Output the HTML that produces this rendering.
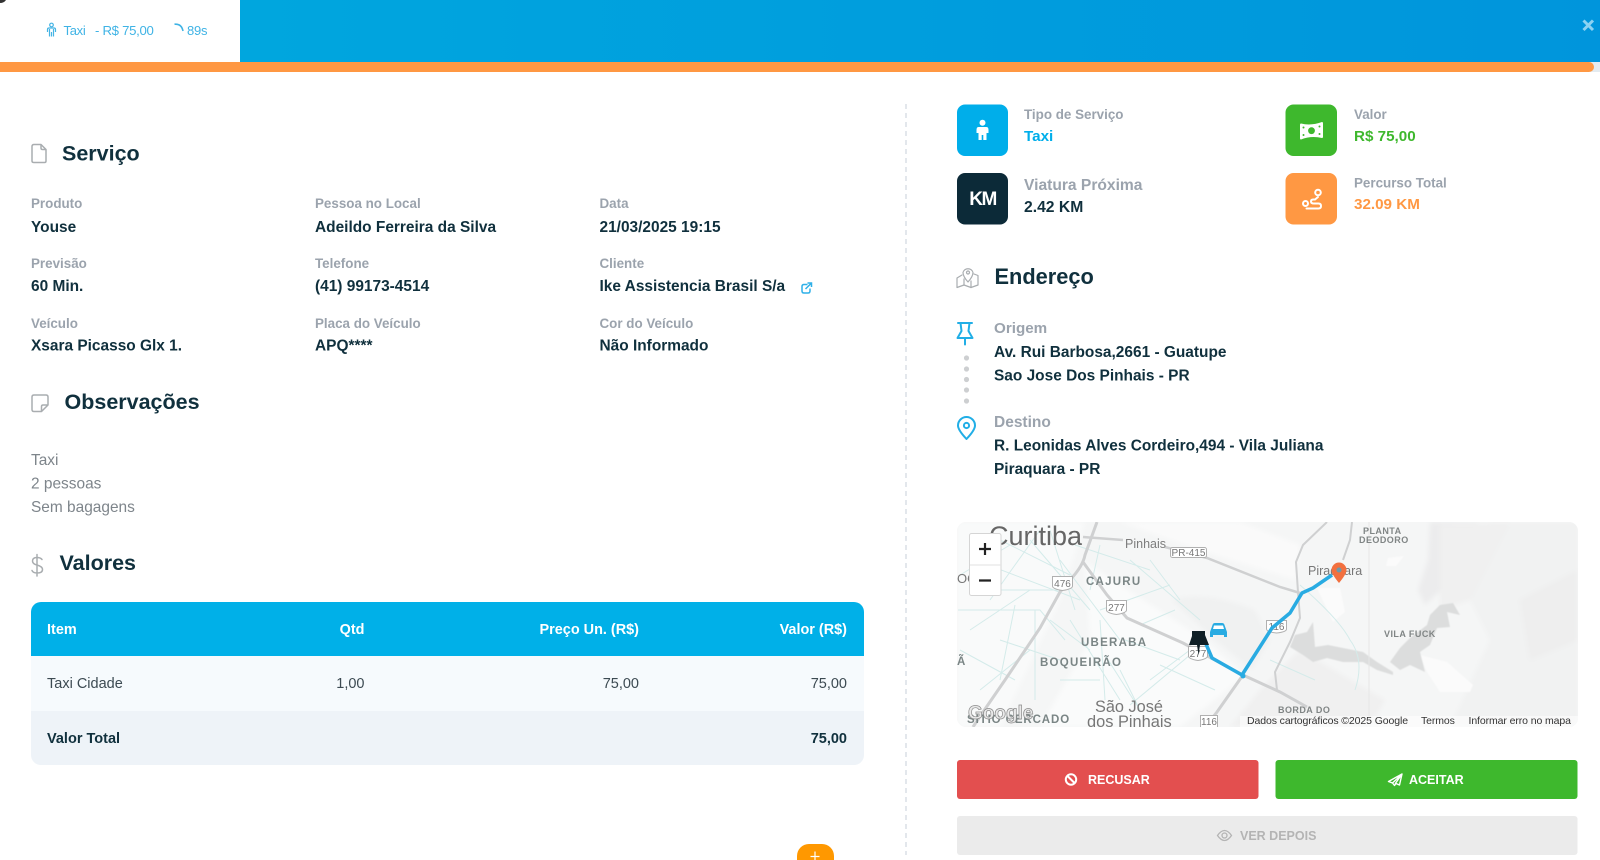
<!DOCTYPE html>
<html lang="pt"><head><meta charset="utf-8"><title>Serviço</title>
<style>
html,body{margin:0;padding:0;background:#fff;width:1600px;height:860px;overflow:hidden}
svg{position:absolute;left:0;top:0;display:block}
text{font-family:"Liberation Sans",sans-serif}
.h{font-size:21.5px;font-weight:700;fill:#10303d}
.l{font-size:13.4px;font-weight:700;fill:#9ba3ad}
.v{font-size:15.45px;font-weight:700;fill:#10303d}
.s{font-size:15.2px;font-weight:700}
.o{font-size:15.45px;fill:#7e858b}
.th{font-size:14.45px;font-weight:700;fill:#fff}
.td{font-size:14.5px;fill:#3c4a52}
.gi{fill:none;stroke:#a9adb0;stroke-width:1.5;stroke-linejoin:round;stroke-linecap:round}
.m{fill:#7a8585;font-weight:700;font-size:11.5px;letter-spacing:1.25px}
.ms{fill:#808585;font-size:9px;font-weight:700;letter-spacing:.45px}
.sh{fill:#fff;stroke:#b0b0b0;stroke-width:1}
.st{font-size:10px;fill:#777;text-anchor:middle}
.r1{fill:none;stroke:#cfd0d1;stroke-width:3}
.r2{fill:none;stroke:#d4ebea;stroke-width:1}
.btn{font-size:12.5px;font-weight:700;fill:#fff}
</style></head><body>
<svg width="1600" height="860" viewBox="0 0 1600 860" xmlns="http://www.w3.org/2000/svg">
<defs>
<linearGradient id="hd" x1="0" x2="1"><stop offset="0" stop-color="#00a6de"/><stop offset="1" stop-color="#0095dc"/></linearGradient>
<clipPath id="mc"><rect x="957" y="522" width="621" height="205" rx="9"/></clipPath>
<filter id="b2" x="-10%" y="-10%" width="120%" height="120%"><feGaussianBlur stdDeviation="2.500"/></filter>
<filter id="b1" x="-10%" y="-10%" width="120%" height="120%"><feGaussianBlur stdDeviation=".6"/></filter>
</defs>

<!-- top bar -->
<path d="M0 3Q4 3 6 0H0Z" fill="#333"/>
<rect x="240" y="0" width="1360" height="62" fill="url(#hd)"/>
<rect x="0" y="62" width="1600" height="10" fill="#e4ebf0"/>
<path d="M0 62H1589a5 5 0 0 1 0 10H0z" fill="#ff9843"/>
<g fill="none" stroke="#45b4e4" stroke-width="1.2">
<circle cx="51.500" cy="25" r="1.800"/>
<path d="M47.500 32V29.500Q47.500 28 49 28H54Q55.500 28 55.500 29.500V32M49.500 29V36.500M53.500 29V36.500M51.500 32V36.500"/>
</g>
<text x="63.500" y="35" font-size="13" letter-spacing="-.3" fill="#3fb3e5">Taxi</text>
<text x="95" y="35" font-size="13.200" letter-spacing="-.3" fill="#3fb3e5">- R$ 75,00</text>
<path d="M174.500 24.200Q181.500 23.500 183 31" fill="none" stroke="#3fb3e5" stroke-width="1.600"/>
<text x="187" y="35" font-size="13" letter-spacing="-.2" fill="#3fb3e5">89s</text>
<path d="M1583.500 20.500L1593 30M1593 20.500L1583.500 30" stroke="#8dd2f2" stroke-width="3"/>

<!-- divider -->
<line x1="906" y1="104" x2="906" y2="855" stroke="#e3e7ec" stroke-width="2" stroke-dasharray="5 4"/>

<!-- Serviço -->
<path class="gi" d="M34 144.500H41L46 149.500V161Q46 162.500 44.500 162.500H34Q32 162.500 32 161V146.500Q32 144.500 34 144.500ZM41 144.500V148Q41 149.500 42.500 149.500H46"/>
<text x="62" y="160.500" class="h">Serviço</text>

<text x="31" y="208" class="l">Produto</text><text x="31" y="232" class="v">Youse</text>
<text x="315" y="208" class="l">Pessoa no Local</text><text x="315" y="232" class="v">Adeildo Ferreira da Silva</text>
<text x="599.500" y="208" class="l">Data</text><text x="599.500" y="232" class="v">21/03/2025 19:15</text>

<text x="31" y="268" class="l">Previsão</text><text x="31" y="291" class="v">60 Min.</text>
<text x="315" y="268" class="l">Telefone</text><text x="315" y="291" class="v">(41) 99173-4514</text>
<text x="599.500" y="268" class="l">Cliente</text><text x="599.500" y="291" class="v">Ike Assistencia Brasil S/a</text>
<g fill="none" stroke="#2fb0e8" stroke-width="1.500"><path d="M807.500 284.500H804Q802 284.500 802 286.500V291Q802 293 804 293H808Q810 293 810 291V288.500"/><path d="M805.500 289L811 283.500M807.500 283H811.500V287"/></g>

<text x="31" y="328" class="l">Veículo</text><text x="31" y="350.500" class="v">Xsara Picasso Glx 1.</text>
<text x="315" y="328" class="l">Placa do Veículo</text><text x="315" y="350.500" class="v">APQ****</text>
<text x="599.500" y="328" class="l">Cor do Veículo</text><text x="599.500" y="350.500" class="v">Não Informado</text>

<!-- Observações -->
<path class="gi" d="M34 395H46Q48 395 48 397V405L41.500 411.500H34Q32 411.500 32 409.500V397Q32 395 34 395ZM48 405H43Q41.500 405 41.500 406.500V411.500"/>
<text x="64.500" y="409" class="h">Observações</text>
<text x="31" y="465" class="o">Taxi</text>
<text x="31" y="488.500" class="o">2 pessoas</text>
<text x="31" y="512" class="o">Sem bagagens</text>

<!-- Valores -->
<path class="gi" d="M42 559.500Q40.500 557.500 37 557.500Q32.500 557.500 32.500 561Q32.500 564 37 565Q42.500 566.500 42.500 569.500Q42.500 573 37 573Q33 573 32 570.500M37 554.500V576"/>
<text x="59.500" y="570" class="h">Valores</text>

<!-- table -->
<path d="M31 612a10 10 0 0 1 10-10H854a10 10 0 0 1 10 10V656H31z" fill="#00b0e8"/>
<rect x="31" y="656" width="833" height="55" fill="#f6fafd"/>
<path d="M31 711H864V755a10 10 0 0 1-10 10H41a10 10 0 0 1-10-10z" fill="#eef3f8"/>
<text x="47" y="634" class="th">Item</text>
<text x="364.500" y="634" class="th" text-anchor="end">Qtd</text>
<text x="639" y="634" class="th" text-anchor="end">Preço Un. (R$)</text>
<text x="847" y="634" class="th" text-anchor="end">Valor (R$)</text>
<text x="47" y="688" class="td">Taxi Cidade</text>
<text x="364.500" y="688" class="td" text-anchor="end">1,00</text>
<text x="639" y="688" class="td" text-anchor="end">75,00</text>
<text x="847" y="688" class="td" text-anchor="end">75,00</text>
<text x="47" y="743" class="td" style="font-weight:700;fill:#10303d">Valor Total</text>
<text x="847" y="743" class="td" text-anchor="end" style="font-weight:700;fill:#10303d">75,00</text>

<!-- FAB -->
<path d="M797 860V856a12 12 0 0 1 12-12H822a12 12 0 0 1 12 12V860z" fill="#ff9800"/>
<path d="M815 851.500V860M810.500 856.500H819.500" stroke="#fff" stroke-width="1.200"/>

<!-- stat boxes -->
<rect x="957" y="104.500" width="51" height="51.500" rx="8" fill="#00aeea"/>
<g fill="#fff"><circle cx="982.500" cy="122.800" r="3"/><path d="M978.500 127H986.500Q988.500 127 988.500 130V133H986.500V140H983.300V135H981.700V140H978.500V133H976.500V130Q976.500 127 978.500 127Z"/></g>
<text x="1024" y="119" class="l">Tipo de Serviço</text>
<text x="1024" y="141" class="s" style="fill:#00aeea">Taxi</text>

<rect x="1285.500" y="104.500" width="51.500" height="51.500" rx="8" fill="#3eb82d"/>
<path d="M1301 123.500Q1311 126 1322 122Q1323 122 1323 123.500V137Q1323 138 1322 138Q1311 135.500 1301 139.500Q1300 139.500 1300 138.500V125Q1300 123.500 1301 123.500Z" fill="#fff"/>
<circle cx="1311.500" cy="130.700" r="3.400" fill="#3eb82d"/>
<g fill="#3eb82d"><circle cx="1303.500" cy="127.500" r="1"/><circle cx="1303.500" cy="135" r="1"/><circle cx="1319.500" cy="126.500" r="1"/><circle cx="1319.500" cy="134" r="1"/></g>
<text x="1354" y="119" class="l">Valor</text>
<text x="1354" y="141" class="s" style="fill:#3eb82d">R$ 75,00</text>

<rect x="957" y="173" width="51" height="51.500" rx="8" fill="#0c2a38"/>
<text x="982.500" y="205" font-size="19" font-weight="700" text-anchor="middle" letter-spacing="-1.500" fill="#fff">KM</text>
<text x="1024" y="190" font-size="15.600" font-weight="700" fill="#9ba3ad">Viatura Próxima</text>
<text x="1024" y="212" class="v" style="font-size:15.7px">2.42 KM</text>

<rect x="1285.500" y="173" width="51.500" height="51.500" rx="8" fill="#ff9843"/>
<g fill="none" stroke="#fff" stroke-width="2" stroke-linecap="round"><circle cx="1318" cy="192.500" r="2.800"/><circle cx="1305.500" cy="203.500" r="2.500"/><path d="M1318 197L1315 199.500H1313Q1311 199.500 1311 201.500Q1311 203.500 1314 203.500H1318.500Q1321 203.500 1321 206Q1321 208.500 1318.500 208.500H1306.500"/></g>
<text x="1354" y="187.300" class="l">Percurso Total</text>
<text x="1354" y="209" class="s" style="fill:#ff9843">32.09 KM</text>

<!-- Endereço -->
<g class="gi" style="stroke-width:1.200"><path d="M962 275L957 278V287.500L964 285L971 287.500L978 285V275.500L974 274"/><path d="M964 285V279M971 287.500V281"/><path d="M968 282Q973 276.500 973 272.500A5.200 5.200 0 0 0 963 272.500Q963 276.500 968 282Z"/><circle cx="968" cy="272.500" r="1.500"/></g>
<text x="994.500" y="284" class="h" style="font-size:21.800px">Endereço</text>

<g fill="none" stroke="#21aee6" stroke-width="2" stroke-linejoin="round" stroke-linecap="round">
<path d="M958 323H972M960.500 323L961.500 331L957.500 338H972.500L968.500 331L969.500 323M965 338V344.500"/>
<path d="M966.500 439Q958 430 958 425.500A8.500 8.500 0 0 1 975 425.500Q975 430 966.500 439Z"/><circle cx="966.500" cy="425.500" r="2.600"/>
</g>
<g fill="#cdcfd1"><circle cx="966.500" cy="358" r="2.600"/><circle cx="966.500" cy="369" r="2.600"/><circle cx="966.500" cy="379.500" r="2.600"/><circle cx="966.500" cy="390" r="2.600"/><circle cx="966.500" cy="401" r="2.600"/></g>
<text x="994" y="333" font-size="15.200" font-weight="700" fill="#9ba3ad">Origem</text>
<text x="994" y="357" class="v">Av. Rui Barbosa,2661 - Guatupe</text>
<text x="994" y="380.500" class="v">Sao Jose Dos Pinhais - PR</text>
<text x="994" y="427" font-size="15.500" font-weight="700" fill="#9ba3ad">Destino</text>
<text x="994" y="450.500" class="v">R. Leonidas Alves Cordeiro,494 - Vila Juliana</text>
<text x="994" y="474" class="v">Piraquara - PR</text>

<!-- map -->
<g clip-path="url(#mc)">
<rect x="957" y="522" width="621" height="205" fill="#f5f6f6"/>
<!-- terrain -->
<g filter="url(#b2)">
<path d="M957 522H1085L1060 600L1000 727H957Z" fill="#f9fafa"/>
<path d="M1085 562L1205 640L1245 676L1180 727H1040L1090 640Z" fill="#fafbfb"/>
<path d="M1120 522H1240L1300 545L1296 580L1205 552Z" fill="#fafafa"/>
<path d="M1430 522H1478L1462 545L1452 580L1425 605L1418 590L1428 560Z" fill="#ececed"/>
<path d="M1490 522H1578V727H1450L1490 640L1470 600Z" fill="#f1f2f2"/>
<path d="M1520 600L1578 570V640L1530 660Z" fill="#eeeeee"/>
<path d="M1440 525L1510 522L1470 600L1440 610Z" fill="#f0f0f0"/>
<path d="M1172 600Q1205 590 1255 610L1270 640L1252 670L1215 640Z" fill="#f0f1f1"/>
<path d="M1260 690L1300 650L1385 700L1370 727H1230Z" fill="#f0f0f0"/>
</g>
<g filter="url(#b1)">
<path d="M1317 588L1340 588L1345 612L1333 622L1325 605Z" fill="#fbfbfb"/>
<path d="M1420 655L1447 662L1473 685L1470 692L1440 692L1427 672Z" fill="#fbfbfb"/>
<path d="M1290 647L1295 635L1307 632L1313 622L1315 647L1328 645L1343 648L1363 652L1377 662L1393 672L1393 675L1377 670L1363 662L1343 662L1327 658L1313 662L1303 655Z" fill="#dcdddd"/>
<path d="M1390 662L1400 648L1410 638L1427 625L1430 615L1440 605L1453 603L1460 615L1447 612L1450 627L1437 628L1430 645L1420 652L1425 672L1410 665L1400 670Z" fill="#dcdddd"/>
<path d="M1388 558L1404 556L1396 566L1386 566Z" fill="#fbfbfb"/>
</g>
<!-- minor roads -->
<g class="r2">
<path d="M958 610H1040L1065 640M975 560L1080 600M990 600L1040 530M1015 605L1000 680M1030 540L1090 610M1060 560L1120 640M1105 655L1140 710M1000 640L1060 660M960 650L1015 680M1100 610L1170 585M1130 560L1200 620M1150 680L1190 650M1130 705L1190 655M1120 670L1140 710M1070 620L1120 700M1035 610V700M1075 545L1150 570M1050 530L1075 610M1100 620L1105 700M1140 625L1175 610"/>
<path d="M960 575L1010 545M970 630L1030 590M1000 590H1060M1050 620L1090 650M980 690L1030 650M1150 560L1180 600M1100 545L1090 590M1125 640L1180 660M1160 665L1215 690M1060 680H1100M1000 540L1070 575"/>
<path d="M1300 585Q1340 620 1350 640Q1365 660 1355 690M1315 680L1270 660"/>
</g>
<path d="M1369 522V716" stroke="#e6e6e6" fill="none"/>
<!-- main roads -->
<path class="r1" d="M1097 522L1085 555Q1083 566 1070 580L1060 592L1040 628L1005 680L983 712L973 727"/>
<path class="r1" d="M1083 537L1123 540M1165 547L1207 558L1280 587L1300 593" style="stroke-width:2.500"/>
<path class="r1" d="M1083 562L1107 595L1127 618L1183 643L1243 675L1280 692L1307 707"/>
<path class="r1" d="M1243 675L1217 712L1205 727"/>
<path class="r1" d="M1327 522L1303 545L1296 562L1298 592L1300 618L1290 642L1275 672L1277 690" style="stroke-width:2"/>
<path class="r1" d="M1352 522L1350 540L1343 560" style="stroke-width:2"/>
<!-- labels -->
<text x="989" y="545" font-size="27" fill="#666">Curitiba</text>
<text x="1125" y="548" font-size="12.500" fill="#7d7d7d">Pinhais</text>
<rect class="sh" x="1170.500" y="547.500" width="36" height="10" rx="2"/><text class="st" x="1188.500" y="556">PR-415</text>
<path class="sh" d="M1052.500 576.500H1072.500V586Q1072.500 589 1062.500 590.500Q1052.500 589 1052.500 586Z"/><text class="st" x="1062.500" y="587">476</text>
<path class="sh" d="M1106.500 600.500H1126.500V610Q1126.500 613 1116.500 614.500Q1106.500 613 1106.500 610Z"/><text class="st" x="1116.500" y="611">277</text>
<path class="sh" d="M1188.500 646.500H1207.500V656Q1207.500 659 1198 660.500Q1188.500 659 1188.500 656Z"/><text class="st" x="1198" y="657">277</text>
<rect class="sh" x="1200.500" y="715.500" width="17" height="12"/><text class="st" x="1209" y="725">116</text>
<path class="sh" d="M1266.500 620.500H1286.500V629Q1286.500 632 1276.500 633Q1266.500 632 1266.500 629Z"/><text class="st" x="1276.500" y="630">116</text>
<text class="m" x="1086" y="585">CAJURU</text>
<text class="m" x="1081" y="646">UBERABA</text>
<text class="m" x="1040" y="666">BOQUEIRÃO</text>
<text x="1095" y="712" font-size="16.300" fill="#777">São José</text>
<text x="1087" y="727" font-size="16.400" fill="#777">dos Pinhais</text>
<text class="m" x="967" y="723" style="letter-spacing:.9px">SÍTIO CERCADO</text>
<text x="968" y="719" font-size="19" font-weight="700" fill="#e9e9e9" stroke="#8c8c8c" stroke-width=".7">Google</text>
<text class="ms" x="1363" y="534">PLANTA</text>
<text class="ms" x="1359" y="543">DEODORO</text>
<text class="ms" x="1384" y="637">VILA FUCK</text>
<text class="ms" x="1278" y="713">BORDA DO</text>
<text x="1308" y="575" font-size="12.500" fill="#777">Piraquara</text>
<text x="957" y="583" font-size="13" fill="#777">OO</text>
<text x="957" y="665" class="m">Ã</text>
<!-- route -->
<path d="M1203 637L1212 658L1242 675L1272 628L1290 613L1302 593L1313 588L1332 575" fill="none" stroke="#29abe2" stroke-width="3.500" stroke-linejoin="round"/>
<circle cx="1243" cy="676" r="2.500" fill="#29abe2"/>
<!-- markers -->
<path d="M1192 631H1205V635L1209 645H1200L1198.500 655L1197 645H1189L1192 636Z" fill="#0f1f26"/>
<path d="M1210 632L1212.500 625Q1213 623 1215 623H1222Q1224 623 1224.500 625L1227 632V637H1224V635H1213V637H1210Z" fill="#29abe2"/>
<path d="M1214 625.500H1223L1224 629H1213Z" fill="#fff"/>
<path d="M1339 583Q1331.500 574 1331.500 570A7.500 7.500 0 0 1 1346.500 570Q1346.500 574 1339 583Z" fill="#f2703f"/>
<circle cx="1339" cy="570" r="2.500" fill="#6f98a8"/>
<!-- attribution -->
<rect x="1240" y="716" width="340" height="12" fill="#fff" fill-opacity=".55"/>
<text x="1247" y="724" font-size="10.500" fill="#333" letter-spacing="-.1">Dados cartográficos ©2025 Google</text>
<text x="1421" y="724" font-size="10.500" fill="#333" letter-spacing="-.1">Termos</text>
<text x="1468.500" y="724" font-size="10.500" fill="#333" letter-spacing="-.1">Informar erro no mapa</text>
<!-- zoom control -->
<rect x="969.500" y="533.500" width="31.500" height="62" rx="2" fill="#fff" stroke="#d5d5d5"/>
<line x1="970" y1="565" x2="1001" y2="565" stroke="#e2e2e2"/>
<path d="M979 549H991M985 543V555M979 580.500H991" stroke="#222" stroke-width="2.200"/>
</g>

<!-- buttons -->
<rect x="957" y="760" width="301.500" height="39" rx="3" fill="#e34f4f"/>
<g fill="none" stroke="#fff" stroke-width="2"><circle cx="1071" cy="779.500" r="5.200"/><path d="M1067.500 776L1074.500 783"/></g>
<text x="1088" y="784" class="btn">RECUSAR</text>

<rect x="1275.500" y="760" width="302" height="39" rx="3" fill="#3eb82d"/>
<path d="M1402 774L1388.500 781.500L1392.500 783L1394.500 785.500L1396 783.500L1399.500 785ZM1392.500 783L1402 774L1395 784" fill="none" stroke="#fff" stroke-width="1.400" stroke-linejoin="round"/>
<text x="1409" y="784" class="btn">ACEITAR</text>

<rect x="957" y="816" width="620.500" height="39" rx="3" fill="#ebebeb"/>
<g fill="none" stroke="#b4b4b4" stroke-width="1.300"><path d="M1217.500 835.500Q1224.500 825.500 1231.500 835.500Q1224.500 845.500 1217.500 835.500Z"/><circle cx="1224.500" cy="835.500" r="2.500"/></g>
<text x="1240" y="840" class="btn" style="fill:#b4b4b4">VER DEPOIS</text>
</svg>
</body></html>
